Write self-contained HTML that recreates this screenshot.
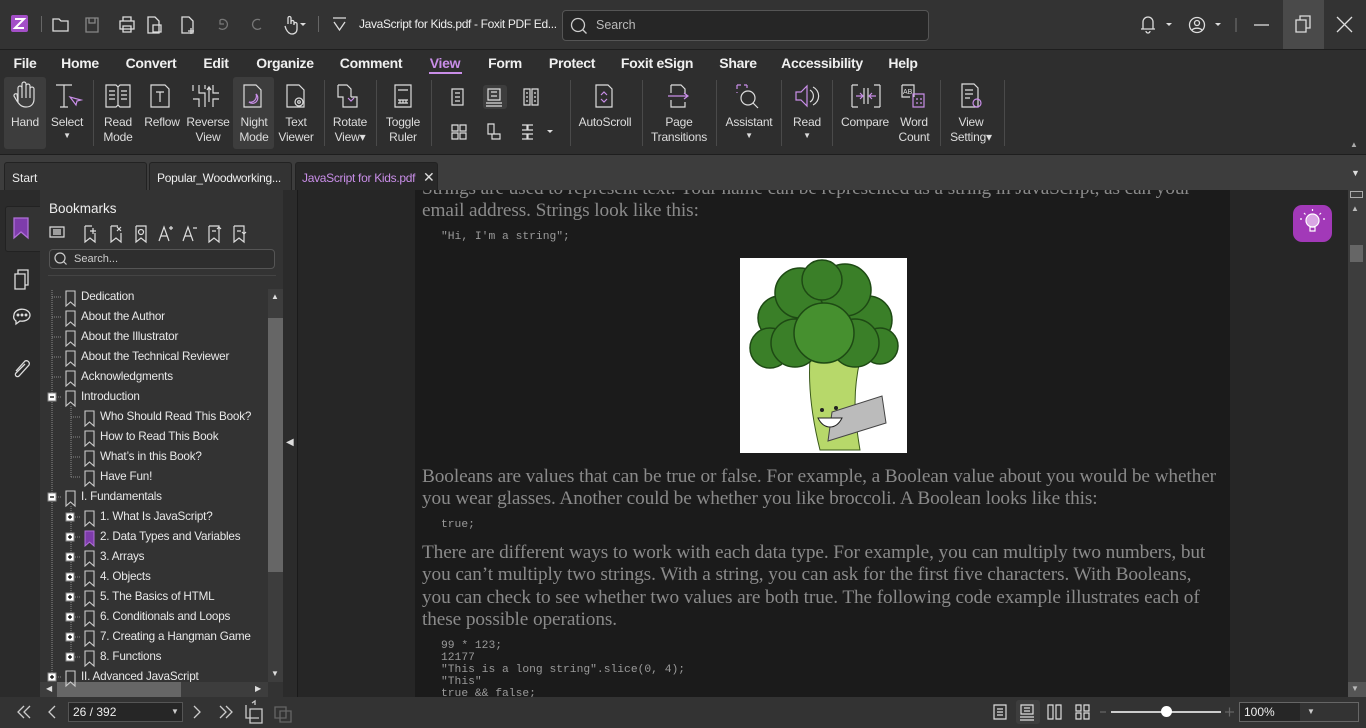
<!DOCTYPE html>
<html><head><meta charset="utf-8"><style>
*{margin:0;padding:0;box-sizing:border-box}
body{width:1366px;height:728px;overflow:hidden;background:#262626;font-family:"Liberation Sans",sans-serif;color:#ddd;position:relative;font-size:12px}
.a{position:absolute}
.lbl{position:absolute;font-size:12px;color:#ddd;text-align:center;line-height:15px;white-space:nowrap;transform:translateX(-50%);letter-spacing:-0.2px}
.menu{position:absolute;top:55px;font-weight:bold;font-size:14px;color:#f0f0f0;transform:translateX(-50%);letter-spacing:-0.3px}
.sep{position:absolute;top:80px;width:1px;height:66px;background:#4a4a4a}
svg{position:absolute;overflow:visible}
.bm{position:absolute;font-size:11.7px;color:#e8e8e8;white-space:nowrap;letter-spacing:-0.2px}
.pt{position:absolute;left:422px;font-family:"Liberation Serif",serif;font-size:19.3px;color:#8a8a8a;white-space:nowrap;letter-spacing:-0.1px}
.cd{position:absolute;left:441px;font-family:"Liberation Mono",monospace;font-size:11.3px;color:#9a9a9a;white-space:pre}
</style></head><body>
<!-- title bar -->
<div class="a" style="left:0;top:0;width:1366px;height:49px;background:#333"></div>
<div class="a" style="left:1283px;top:0;width:41px;height:49px;background:#4a4a4a"></div>
<div class="a" style="left:0;top:49px;width:1366px;height:1px;background:#1e1e1e"></div>
<div class="a" style="left:11px;top:15px;width:17px;height:17px;background:#a34fc7;border-radius:2px"></div>
<svg style="left:11px;top:15px" width="17" height="17"><path d="M4 4h9L4 13h9" stroke="#fff" stroke-width="2" fill="none"/></svg>
<div class="a" style="left:41px;top:16px;width:1px;height:16px;background:#666"></div>
<svg style="left:52px;top:15px" width="300" height="20" fill="none" stroke="#ddd" stroke-width="1.3">
<path d="M1 4h6l2 2h7v10H1z"/><path d="M34 3h12v14H34z M37 3v5h6V3" stroke="#888"/>
<path d="M68 6h14v8H68z M71 6V2h8v4 M71 11h8v6h-8z"/><path d="M96 2h7l4 4v12H96z M101 10h8v7h-8z"/>
<path d="M130 2h7l4 4v12h-11z M139 13v6 M136 16h6"/><path d="M168 5a5 5 0 1 1-1 8 M168 5v4h4" stroke="#777"/><path d="M208 5a5 5 0 1 0 1 8" stroke="#777"/>
<path d="M236 9V3a1.5 1.5 0 0 1 3 0v6 M239 8V7a1.5 1.5 0 0 1 3 0v3 M242 9a1.5 1.5 0 0 1 3 0v5c0 3-2 5-5 5s-5-3-6-5l-1-3"/>
<path d="M248 8l3 3 3-3z" fill="#ddd" stroke="none"/>
</svg>
<div class="a" style="left:318px;top:16px;width:1px;height:16px;background:#666"></div>
<svg style="left:332px;top:17px" width="16" height="16" fill="none" stroke="#ddd" stroke-width="1.3"><path d="M1 1h13M2 5l5.5 8 5.5-8"/></svg>
<div class="a" style="left:359px;top:17px;font-size:12px;color:#eee;letter-spacing:-0.35px">JavaScript for Kids.pdf - Foxit PDF Ed...</div>
<div class="a" style="left:562px;top:10px;width:367px;height:31px;background:#262626;border:1px solid #555;border-radius:4px"></div>
<svg style="left:570px;top:17px" width="18" height="18" fill="none" stroke="#ccc" stroke-width="1.3"><circle cx="8" cy="8" r="6.5"/><path d="M12.5 12.5l4 4"/></svg>
<div class="a" style="left:596px;top:18px;color:#bbb;font-size:12.5px">Search</div>
<svg style="left:1140px;top:14px" width="220" height="22" fill="none" stroke="#ddd" stroke-width="1.3">
<path d="M3 15V8a5 5 0 0 1 10 0v7h2H1z M6 17a2 2 0 0 0 4 0"/><path d="M26 9l3 3 3-3z" fill="#ddd" stroke="none"/>
<circle cx="57" cy="11" r="7.5"/><circle cx="57" cy="9" r="2.5"/><path d="M52 16a6 4 0 0 1 10 0"/><path d="M75 9l3 3 3-3z" fill="#ddd" stroke="none"/>
<path d="M96 4v14" stroke="#666"/><path d="M114 11h15"/>
<path d="M156 6h10v12h-10z M160 6V2h10v12h-4"/><path d="M197 3l15 15M212 3l-15 15"/></svg>
<!-- menu -->
<div class="a" style="left:0;top:50px;width:1366px;height:104px;background:#2e2e2e"></div>
<div class="menu" style="left:25px">File</div><div class="menu" style="left:80px">Home</div><div class="menu" style="left:151px">Convert</div><div class="menu" style="left:216px">Edit</div><div class="menu" style="left:285px">Organize</div><div class="menu" style="left:371px">Comment</div><div class="menu" style="left:445px;color:#c98ee8">View</div><div class="menu" style="left:505px">Form</div><div class="menu" style="left:572px">Protect</div><div class="menu" style="left:657px">Foxit eSign</div><div class="menu" style="left:738px">Share</div><div class="menu" style="left:822px">Accessibility</div><div class="menu" style="left:903px">Help</div>
<div class="a" style="left:429px;top:72px;width:33px;height:2px;background:#c98ee8"></div>
<!-- ribbon -->
<div class="a" style="left:4px;top:77px;width:42px;height:72px;background:#3d3d3d;border-radius:3px"></div>
<div class="a" style="left:233px;top:77px;width:41px;height:72px;background:#3d3d3d;border-radius:3px"></div>
<div class="a" style="left:483px;top:85px;width:24px;height:24px;background:#3d3d3d;border-radius:3px"></div>
<div class="sep" style="left:93px"></div><div class="sep" style="left:324px"></div><div class="sep" style="left:376px"></div><div class="sep" style="left:431px"></div><div class="sep" style="left:570px"></div><div class="sep" style="left:642px"></div><div class="sep" style="left:716px"></div><div class="sep" style="left:781px"></div><div class="sep" style="left:832px"></div><div class="sep" style="left:940px"></div><div class="sep" style="left:1004px"></div>
<svg style="left:0;top:80px" width="1010" height="70" fill="none" stroke="#ddd" stroke-width="1.2">
<path d="M18 22V8a2 2 0 0 1 4 0v10V4a2 2 0 0 1 4 0v14V6a2 2 0 0 1 4 0v12V9a2 2 0 0 1 4 0v10c0 5-3 8-8 8s-7-3-9-6l-3-5a2 2 0 0 1 3-2z"/>
<path d="M56 5h16M64 5v22M60 27h8"/><path d="M70 17l6 8 1-4 4-1z" stroke="#c98ee8"/>
<path d="M106 5h10l2 2 2-2h10v22h-10l-2-2-2 2h-10z M118 7v18 M109 11h6M109 15h6M109 19h6M121 11h6M121 15h6M121 19h6"/>
<path d="M151 5h14l4 4v18h-18z M156 12h8M160 12v10"/>
<path d="M199 5v8h6v14 M205 5v4 M199 27v-8h-6 M193 5v6 M213 5v8h6 M213 27v-8h6 M209 8v14 M207 10l2-3 2 3" />
<path d="M244 5h12l5 5v17h-17z"/><path d="M256 14a5 5 0 0 1-7 8 6 6 0 0 0 7-8z" stroke="#c98ee8"/>
<path d="M287 5h12l5 5v17h-17z"/><circle cx="299" cy="22" r="4"/><circle cx="299" cy="22" r="1.3"/>
<path d="M338 5h9l4 4v8 M338 5v12h5v10h14V17h-6" /><path d="M348 18l3 3 3-3" stroke="#c98ee8"/>
<path d="M395 5h16v22h-16z M398 10h10 M398 20h10 M398 23h10 M400 20v3M403 20v3M406 20v3"/>
<path d="M452 9h11v16h-11z M455 13h5M455 17h5M455 21h5"/>
<path d="M488 9h12v11h-12z M491 12h6M491 16h6 M486 23h16 M486 26h16"/>
<path d="M524 9h6v16h-6z M532 9h6v16h-6z M526 13h2M526 17h2M526 21h2M534 13h2M534 17h2M534 21h2"/>
<path d="M452 45h6v6h-6z M460 45h6v6h-6z M452 53h6v6h-6z M460 53h6v6h-6z"/>
<path d="M488 44h6v10h-6z M492 54h8v5h-8z"/>
<path d="M522 45h5v5h-5M533 45h-5v5h5 M522 59h5v-5h-5 M533 59h-5v-5h5"/><path d="M547 50l3 3 3-3z" fill="#ddd" stroke="none"/>
<path d="M596 5h12l4 4v18h-16z"/><path d="M601 15l3-3 3 3 M601 19l3 3 3-3" stroke="#c98ee8"/>
<path d="M671 5h10l4 4v5 M671 5v8 M671 20v7h14v-5"/><path d="M668 16h20 M684 13l4 3-4 3" stroke="#c98ee8"/>
<path d="M737 5h4M737 5v4 M747 5h-3 M747 5v3 M737 13v-1" stroke="#c98ee8"/><circle cx="748" cy="18" r="7"/><path d="M753 23l5 5"/>
<path d="M796 12h5l6-6v20l-6-6h-5z" stroke="#c98ee8"/><path d="M810 10a7 7 0 0 1 0 12 M813 7a10 10 0 0 1 0 18"/>
<path d="M852 5v22 M880 5v22 M852 5h6M852 27h6 M880 5h-6 M880 27h-6 M864 8v16 M868 8v16"/><path d="M856 16h7 M860 13l3 3-3 3 M876 16h-7 M872 13l-3 3 3 3" stroke="#c98ee8"/>
<path d="M902 5h12v12 M902 5v12h8" /><text x="903" y="14" font-size="7" fill="#ddd" stroke="none" font-family="Liberation Sans">AB</text><path d="M913 14h11v13h-11z M916 19h2M920 19h2M916 23h2M920 23h2" stroke="#c98ee8"/>
<path d="M962 4h12l4 4v19h-16z M965 10h8M965 14h8M965 18h5"/><circle cx="977" cy="23" r="4" stroke="#c98ee8"/>
</svg>
<div class="lbl" style="left:25px;top:115px">Hand</div>
<div class="lbl" style="left:67px;top:115px">Select</div>
<div class="lbl" style="left:118px;top:115px">Read<br>Mode</div>
<div class="lbl" style="left:162px;top:115px">Reflow</div>
<div class="lbl" style="left:208px;top:115px">Reverse<br>View</div>
<div class="lbl" style="left:254px;top:115px">Night<br>Mode</div>
<div class="lbl" style="left:296px;top:115px">Text<br>Viewer</div>
<div class="lbl" style="left:350px;top:115px">Rotate<br>View▾</div>
<div class="lbl" style="left:403px;top:115px">Toggle<br>Ruler</div>
<div class="lbl" style="left:605px;top:115px">AutoScroll</div>
<div class="lbl" style="left:679px;top:115px">Page<br>Transitions</div>
<div class="lbl" style="left:749px;top:115px">Assistant</div>
<div class="lbl" style="left:807px;top:115px">Read</div>
<div class="lbl" style="left:865px;top:115px">Compare</div>
<div class="lbl" style="left:914px;top:115px">Word<br>Count</div>
<div class="lbl" style="left:971px;top:115px">View<br>Setting▾</div>
<div class="lbl" style="left:67px;top:128px;font-size:8px">▼</div>
<div class="lbl" style="left:749px;top:128px;font-size:8px">▼</div>
<div class="lbl" style="left:807px;top:128px;font-size:8px">▼</div>
<div class="a" style="left:1350px;top:140px;font-size:8px;color:#aaa">▲</div>
<div class="a" style="left:0;top:154px;width:1366px;height:1px;background:#1e1e1e"></div>
<!-- tabs -->
<div class="a" style="left:0;top:155px;width:1366px;height:35px;background:#3d3d3d"></div>
<div class="a" style="left:4px;top:162px;width:143px;height:28px;background:#333;border:1px solid #222;border-bottom:none;border-radius:3px 3px 0 0"></div>
<div class="a" style="left:149px;top:162px;width:143px;height:28px;background:#333;border:1px solid #222;border-bottom:none;border-radius:3px 3px 0 0"></div>
<div class="a" style="left:295px;top:162px;width:143px;height:28px;background:#282828;border:1px solid #222;border-bottom:none;border-radius:3px 3px 0 0"></div>
<div class="a" style="left:12px;top:171px;color:#eee">Start</div>
<div class="a" style="left:157px;top:171px;color:#eee;letter-spacing:-0.3px">Popular_Woodworking...</div>
<div class="a" style="left:302px;top:171px;color:#c98ee8;letter-spacing:-0.3px">JavaScript for Kids.pdf</div>
<div class="a" style="left:423px;top:169px;color:#ddd;font-size:14px">✕</div>
<div class="a" style="left:1351px;top:168px;font-size:9px;color:#ddd">▼</div>
<!-- left strip -->
<div class="a" style="left:0;top:190px;width:40px;height:507px;background:#2b2b2b"></div>
<div class="a" style="left:5px;top:206px;width:36px;height:46px;background:#333;border:1px solid #222;border-right:none;border-radius:3px 0 0 3px"></div>
<svg style="left:12px;top:218px" width="20" height="160" fill="none" stroke="#ddd" stroke-width="1.3">
<path d="M2 0h14v20l-7-6-7 6z" fill="#7e3cab" stroke="#b070d8"/>
<path d="M3 56h10v15H3z M6 56v-4h10v15h-3"/>
<path d="M2 97a8 6 0 1 1 6 6l-4 3v-3a8 6 0 0 1-2-6z"/><circle cx="6" cy="97" r=".8" fill="#ddd"/><circle cx="10" cy="97" r=".8" fill="#ddd"/><circle cx="14" cy="97" r=".8" fill="#ddd"/>
<path d="M4 153l9-10a3 3 0 0 1 4 4l-10 11a2 2 0 0 1-3-3l9-9"/></svg>
<!-- bookmark panel -->
<div class="a" style="left:40px;top:190px;width:243px;height:507px;background:#333"></div>
<div class="a" style="left:49px;top:201px;font-size:13.5px;color:#eee">Bookmarks</div>
<svg style="left:49px;top:224px" width="210" height="20" fill="none" stroke="#ddd" stroke-width="1.2">
<path d="M1 3h14v10H1z M4 6h8M4 8h8M4 10h8"/>
<path d="M36 2v16l5-4 5 4V9 M36 2h7 M44 4v6M41 7h6"/>
<path d="M62 2v16l5-4 5 4V9 M62 2h7 M68 3l4 4M72 3l-4 4"/>
<path d="M87 2v16l5-4 5 4V2h-10"/><circle cx="92" cy="8" r="2.5"/>
<path d="M110 17l5-14 5 14M112 12h6 M120 4h4M122 2v4"/>
<path d="M134 17l5-14 5 14M136 12h6 M144 4h4"/>
<path d="M160 2v16l5-4 5 4V2h-10 M163 7h4 M170 10V3l-2 2M170 3l2 2"/>
<path d="M185 2v16l5-4 5 4V2h-10 M188 7h4 M195 3v7l-2-2M195 10l2-2"/></svg>
<div class="a" style="left:49px;top:249px;width:226px;height:20px;border:1px solid #555;border-radius:4px;background:#2e2e2e"></div>
<svg style="left:54px;top:252px" width="14" height="14" fill="none" stroke="#ccc" stroke-width="1.2"><circle cx="6" cy="6" r="5"/><path d="M9.5 9.5l3 3"/></svg>
<div class="a" style="left:74px;top:253px;font-size:11px;color:#ccc">Search...</div>
<div class="a" style="left:48px;top:275px;width:228px;height:1px;background:#444"></div>
<div class="a" style="left:268px;top:289px;width:15px;height:393px;background:#3d3d3d"></div>
<div class="a" style="left:268px;top:318px;width:15px;height:254px;background:#666"></div>
<div class="a" style="left:271px;top:292px;font-size:8px;color:#ddd">▲</div>
<div class="a" style="left:271px;top:669px;font-size:8px;color:#ddd">▼</div>
<div class="a" style="left:40px;top:682px;width:228px;height:15px;background:#3d3d3d"></div>
<div class="a" style="left:57px;top:682px;width:124px;height:15px;background:#666"></div>
<div class="a" style="left:46px;top:684px;font-size:8px;color:#ddd">◀</div>
<div class="a" style="left:255px;top:684px;font-size:8px;color:#ddd">▶</div>
<svg style="left:40px;top:286px" width="228" height="396" fill="none">
<g stroke="#888" stroke-dasharray="1 1"><path d="M12 4v392 M31 120v72 M31 220v152"/>
<path d="M12 11h10M12 31h10M12 51h10M12 71h10M12 91h10M12 111h10M12 211h10M12 391h10 M31 131h10M31 151h10M31 171h10M31 191h10 M31 231h10M31 251h10M31 271h10M31 291h10M31 311h10M31 331h10M31 351h10M31 371h10"/></g>
<g stroke="#ccc" stroke-width="1.1">
<path d="M26 5h9v15l-4.5-4-4.5 4z M26 25h9v15l-4.5-4-4.5 4z M26 45h9v15l-4.5-4-4.5 4z M26 65h9v15l-4.5-4-4.5 4z M26 85h9v15l-4.5-4-4.5 4z M26 105h9v15l-4.5-4-4.5 4z M26 205h9v15l-4.5-4-4.5 4z M26 385h9v15l-4.5-4-4.5 4z"/>
<path d="M45 125h9v15l-4.5-4-4.5 4z M45 145h9v15l-4.5-4-4.5 4z M45 165h9v15l-4.5-4-4.5 4z M45 185h9v15l-4.5-4-4.5 4z M45 225h9v15l-4.5-4-4.5 4z M45 265h9v15l-4.5-4-4.5 4z M45 285h9v15l-4.5-4-4.5 4z M45 305h9v15l-4.5-4-4.5 4z M45 325h9v15l-4.5-4-4.5 4z M45 345h9v15l-4.5-4-4.5 4z M45 365h9v15l-4.5-4-4.5 4z"/></g>
<path d="M45 245h9v15l-4.5-4-4.5 4z" fill="#7e3cab" stroke="#b070d8"/>
<g fill="#fff" stroke="#888"><rect x="8" y="107" width="8" height="8"/><rect x="8" y="207" width="8" height="8"/><rect x="8" y="387" width="8" height="8"/>
<rect x="26" y="227" width="8" height="8"/><rect x="26" y="247" width="8" height="8"/><rect x="26" y="267" width="8" height="8"/><rect x="26" y="287" width="8" height="8"/><rect x="26" y="307" width="8" height="8"/><rect x="26" y="327" width="8" height="8"/><rect x="26" y="347" width="8" height="8"/><rect x="26" y="367" width="8" height="8"/></g>
<g stroke="#000" stroke-width="1.2"><path d="M10 111h4M10 211h4M10 391h4M12 389v4 M28 231h4M30 229v4 M28 251h4M30 249v4 M28 271h4M30 269v4 M28 291h4M30 289v4 M28 311h4M30 309v4 M28 331h4M30 329v4 M28 351h4M30 349v4 M28 371h4M30 369v4"/></g>
</svg>
<div class="bm" style="left:81px;top:290px">Dedication</div>
<div class="bm" style="left:81px;top:310px">About the Author</div>
<div class="bm" style="left:81px;top:330px">About the Illustrator</div>
<div class="bm" style="left:81px;top:350px">About the Technical Reviewer</div>
<div class="bm" style="left:81px;top:370px">Acknowledgments</div>
<div class="bm" style="left:81px;top:390px">Introduction</div>
<div class="bm" style="left:100px;top:410px">Who Should Read This Book?</div>
<div class="bm" style="left:100px;top:430px">How to Read This Book</div>
<div class="bm" style="left:100px;top:450px">What’s in this Book?</div>
<div class="bm" style="left:100px;top:470px">Have Fun!</div>
<div class="bm" style="left:81px;top:490px">I. Fundamentals</div>
<div class="bm" style="left:100px;top:510px">1. What Is JavaScript?</div>
<div class="bm" style="left:100px;top:530px">2. Data Types and Variables</div>
<div class="bm" style="left:100px;top:550px">3. Arrays</div>
<div class="bm" style="left:100px;top:570px">4. Objects</div>
<div class="bm" style="left:100px;top:590px">5. The Basics of HTML</div>
<div class="bm" style="left:100px;top:610px">6. Conditionals and Loops</div>
<div class="bm" style="left:100px;top:630px">7. Creating a Hangman Game</div>
<div class="bm" style="left:100px;top:650px">8. Functions</div>
<div class="a" style="left:40px;top:670px;width:228px;height:12px;overflow:hidden"><div class="bm" style="left:41px;top:0">II. Advanced JavaScript</div></div>
<!-- collapse strip -->
<div class="a" style="left:283px;top:190px;width:14px;height:507px;background:#2b2b2b"></div>
<div class="a" style="left:286px;top:437px;font-size:10px;color:#ddd">◀</div>
<div class="a" style="left:297px;top:190px;width:1px;height:507px;background:#1a1a1a"></div>
<!-- doc -->
<div class="a" style="left:415px;top:190px;width:815px;height:507px;background:#1b1b1b;overflow:hidden">
<div class="pt" style="left:7px;top:-12px">Strings are used to represent text. Your name can be represented as a string in JavaScript, as can your</div>
<div class="pt" style="left:7px;top:10px">email address. Strings look like this:</div>
<div class="cd" style="left:26px;top:41px">"Hi, I'm a string";</div>
<div class="pt" style="left:7px;top:276px">Booleans are values that can be true or false. For example, a Boolean value about you would be whether</div>
<div class="pt" style="left:7px;top:298px">you wear glasses. Another could be whether you like broccoli. A Boolean looks like this:</div>
<div class="cd" style="left:26px;top:329px">true;</div>
<div class="pt" style="left:7px;top:352px">There are different ways to work with each data type. For example, you can multiply two numbers, but</div>
<div class="pt" style="left:7px;top:374px">you can’t multiply two strings. With a string, you can ask for the first five characters. With Booleans,</div>
<div class="pt" style="left:7px;top:397px">you can check to see whether two values are both true. The following code example illustrates each of</div>
<div class="pt" style="left:7px;top:419px">these possible operations.</div>
<div class="cd" style="left:26px;top:450px">99 * 123;
12177
"This is a long string".slice(0, 4);
"This"
true &amp;&amp; false;</div>
</div>
<svg style="left:740px;top:258px" width="167" height="195">
<rect width="167" height="195" fill="#fff"/>
<path d="M70 100c-2 30 2 60 10 92h40c-5-30-8-55 0-90z" fill="#b7d86a" stroke="#3a5a1a"/>
<g fill="#3a7f28" stroke="#1e4a14" stroke-width="1.5">
<circle cx="40" cy="60" r="22"/><circle cx="128" cy="62" r="24"/><circle cx="60" cy="35" r="25"/><circle cx="105" cy="32" r="26"/><circle cx="82" cy="22" r="20"/>
<circle cx="30" cy="90" r="20"/><circle cx="140" cy="88" r="18"/><circle cx="55" cy="85" r="24"/><circle cx="115" cy="85" r="24"/><circle cx="84" cy="75" r="30" fill="#46902f"/></g>
<path d="M88 183l58-18-4-27-50 16z" fill="#bbb" stroke="#444"/>
<circle cx="82" cy="152" r="2" fill="#222"/><circle cx="96" cy="150" r="2" fill="#222"/>
<path d="M78 160c6 12 18 12 24 0z" fill="#fff" stroke="#222"/>
</svg>
<div class="a" style="left:1230px;top:190px;width:118px;height:507px;background:#262626"></div>
<div class="a" style="left:1293px;top:205px;width:39px;height:37px;background:#a239b8;border-radius:9px"></div>
<svg style="left:1293px;top:205px" width="39" height="37" fill="none" stroke="#fff" stroke-width="1.2"><circle cx="19.5" cy="15.5" r="6.5" fill="#d9a6e4"/><path d="M17 22h5v4h-5z M19.5 4v2 M11 8l1.5 1.5 M28 8l-1.5 1.5 M7 14h2 M30 14h2"/></svg>
<div class="a" style="left:1348px;top:190px;width:18px;height:507px;background:#3d3d3d"></div>
<div class="a" style="left:1350px;top:191px;width:13px;height:7px;border:1px solid #aaa"></div>
<div class="a" style="left:1351px;top:204px;font-size:8px;color:#bbb">▲</div>
<div class="a" style="left:1350px;top:245px;width:13px;height:17px;background:#666"></div>
<div class="a" style="left:1348px;top:682px;width:18px;height:15px;background:#555"></div>
<div class="a" style="left:1351px;top:684px;font-size:8px;color:#bbb">▼</div>
<!-- status -->
<div class="a" style="left:0;top:697px;width:1366px;height:31px;background:#333"></div>
<svg style="left:0;top:700px" width="300" height="26" fill="none" stroke="#ccc" stroke-width="1.3">
<path d="M24 6l-6 6 6 6M30 6l-6 6 6 6 M55 6l-6 6 6 6 M194 6l6 6-6 6 M220 6l6 6-6 6M226 6l6 6-6 6 M246 5v13h13 M250 9h12v14h-12z M252 3l3-2v4" /><path d="M275 7h11v11h-11z M280 11h11v11h-11z" stroke="#666"/></svg>
<div class="a" style="left:68px;top:702px;width:115px;height:20px;border:1px solid #555;background:#262626"></div>
<div class="a" style="left:73px;top:705px;color:#eee;font-size:12px">26 / 392</div>
<div class="a" style="left:171px;top:707px;font-size:8px;color:#ccc">▼</div>
<div class="a" style="left:1016px;top:700px;width:24px;height:24px;background:#3d3d3d;border-radius:3px"></div>
<svg style="left:990px;top:700px" width="376" height="26" fill="none" stroke="#ddd" stroke-width="1.2">
<path d="M4 5h12v14H4z M7 9h6M7 12h6M7 15h6 M31 5h12v9H31z M34 8h6M34 11h6 M30 17h14M30 20h14 M58 5h5v14h-5z M66 5h5v14h-5z M86 5h5v6h-5z M94 5h5v6h-5z M86 13h5v6h-5z M94 13h5v6h-5z"/>
<path d="M110 12h6" stroke="#666"/><path d="M121 12h110" stroke="#ccc" stroke-width="2"/><path d="M235 12h9M239.5 7.5v9" stroke="#666"/>
<path d="M338 4l3 3M338 4h3M338 4v3 M349 4l-3 3M349 4h-3M349 4v3 M338 20l3-3M338 20h3M338 20v-3 M349 20l-3-3M349 20h-3M349 20v-3"/></svg>
<div class="a" style="left:1161px;top:706px;width:11px;height:11px;border-radius:50%;background:#fff"></div>
<div class="a" style="left:1239px;top:702px;width:120px;height:20px;border:1px solid #666;background:#333"></div>
<div class="a" style="left:1240px;top:703px;width:60px;height:18px;background:#262626"></div>
<div class="a" style="left:1244px;top:705px;color:#eee">100%</div>
<div class="a" style="left:1307px;top:707px;font-size:8px;color:#ccc">▼</div>
</body></html>
